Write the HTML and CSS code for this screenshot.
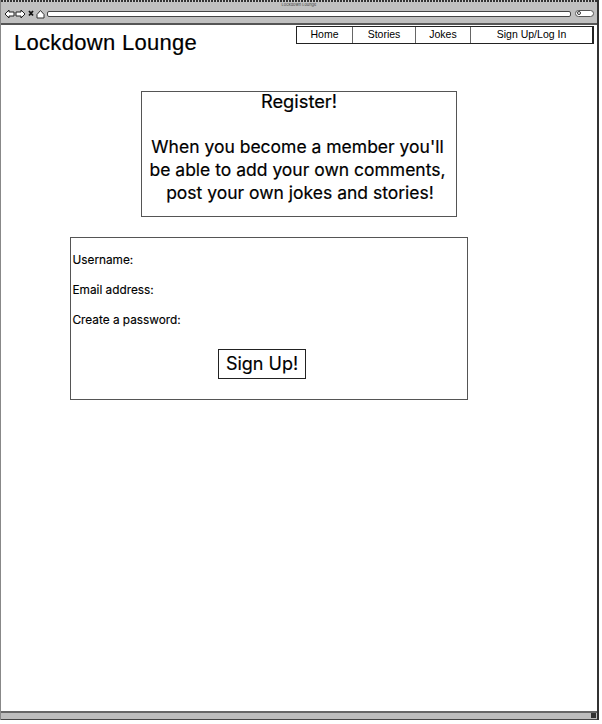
FILE: index.html
```html
<!DOCTYPE html>
<html lang="en">
<head>
<meta charset="utf-8">
<title>Lockdown Lounge</title>
<link rel="stylesheet" href="styles.css">
</head>
<body>
<div class="window">
  <div class="dots"></div>
  <header class="chrome">
    <div class="tab-title">Lockdown Lounge</div>
    <div class="toolbar">
      <svg class="tools" width="43" height="12" viewBox="0 0 43 12">
        <path d="M1 6 L5 2 V4 H10 V8 H5 V10 Z" fill="#fff" stroke="#222" stroke-width="1"/>
        <path d="M21 6 L17 2 V4 H12 V8 H17 V10 Z" fill="#fff" stroke="#222" stroke-width="1"/>
        <path d="M25 3 L29 7.500 M29 3 L25 7.500" stroke="#111" stroke-width="1.800"/>
        <path d="M33 6.500 L36.500 2.500 L40 6.500 V10 H33 Z" fill="#fff" stroke="#333" stroke-width="1"/>
      </svg>
      <div class="address"></div>
      <div class="search"><span class="lens"></span></div>
    </div>
  </header>
  <main class="page">
    <div class="top">
      <h1 class="brand">Lockdown Lounge</h1>
      <nav class="nav">
        <a class="nav-item home">Home</a>
        <a class="nav-item stories">Stories</a>
        <a class="nav-item jokes">Jokes</a>
        <a class="nav-item sign">Sign Up/Log In</a>
      </nav>
    </div>
    <section class="intro">
      <p class="intro-title">Register!</p>
      <p class="intro-text">When you become a member you'll<br>be able to add your own comments,<br>&nbsp;post your own jokes and stories!</p>
    </section>
    <form class="form">
      <p class="label">Username:</p>
      <p class="label">Email address:</p>
      <p class="label">Create a password:</p>
      <div class="actions"><button type="button" class="submit">Sign Up!</button></div>
    </form>
  </main>
  <footer class="status"><span class="grip"></span></footer>
</div>
</body>
</html>
```
FILE: styles.css
```css
* { box-sizing: border-box; }
html, body { margin: 0; padding: 0; background: #fff; }
body { width: 602px; height: 724px; font-family: "Inter", "Liberation Sans", sans-serif; font-weight: 400; color: #000; overflow: hidden; }
.window { width: 599px; height: 720px; display: flex; flex-direction: column; border-left: 1px solid #888; border-right: 2px solid #333; }
.dots { height: 2px; flex: none; background: repeating-linear-gradient(90deg, #333 0 2px, #ccc 2px 3px); }
.chrome { height: 23px; flex: none; background: #c0c0c0; border-bottom: 2px solid #555; }
.tab-title { height: 5px; font-size: 4px; line-height: 5px; text-align: center; color: #444; }
.toolbar { display: flex; align-items: center; padding: 0 3px; height: 13px; }
.tools { flex: none; }
.address { width: 525px; height: 6px; background: #fff; border: 1px solid #444; border-radius: 2px; }
.search { width: 19px; height: 7px; margin-left: 4px; background: #fff; border: 1px solid #555; border-radius: 4px; position: relative; }
.lens { position: absolute; left: 1px; top: 0; width: 4px; height: 4px; border: 1px solid #333; border-radius: 50%; }
.page { flex: 1; background: #fff; display: flex; flex-direction: column; }
.top { display: flex; justify-content: space-between; align-items: flex-start; height: 66px; padding-right: 3px; }
.brand { margin: 4px 0 0 13px; font-size: 22px; line-height: 28px; font-weight: 400; font-family: "Liberation Sans", sans-serif; letter-spacing: 0.3px; -webkit-text-stroke: 0.2px #000; }
.nav { display: flex; width: 298px; height: 18px; margin-top: 1px; border: 1px solid #222; border-right-width: 2px; }
.nav-item { font-family: "Liberation Sans", sans-serif; font-size: 10.500px; line-height: 15px; text-align: center; border-right: 1px solid #666; }
.home { width: 56px; }
.stories { width: 63px; }
.jokes { width: 55px; }
.sign { flex: 1; border-right: 0; }
.intro { width: 316px; height: 126px; margin-left: 140px; padding-right: 3px; border: 1px solid #555; text-align: center; font-size: 17.500px; line-height: 23px; -webkit-text-stroke: 0.2px #000; }
.intro-text { margin: 0; }
.intro-title { height: 43px; margin: -2px 0 2px; padding-left: 3px; font-size: 18.300px; }
.form { width: 398px; height: 163px; margin: 20px 0 0 69px; border: 1px solid #555; padding: 14px 2px 0 1.500px; font-size: 11.800px; -webkit-text-stroke: 0.15px #000; }
.label { margin: 0 0 14px; line-height: 16px; }
.actions { margin-top: 21px; padding-left: 145.500px; }
.submit { width: 88px; height: 30px; padding: 0 0 2px; background: #fff; border: 1px solid #222; border-radius: 0; font: inherit; font-size: 18px; color: #000; }
.status { height: 9px; flex: none; background: #bdbdbd; border-top: 2px solid #666; border-bottom: 1px solid #444; display: flex; justify-content: flex-end; }
.grip { width: 5px; height: 5px; background: #333; margin: 0 1px; }
```
